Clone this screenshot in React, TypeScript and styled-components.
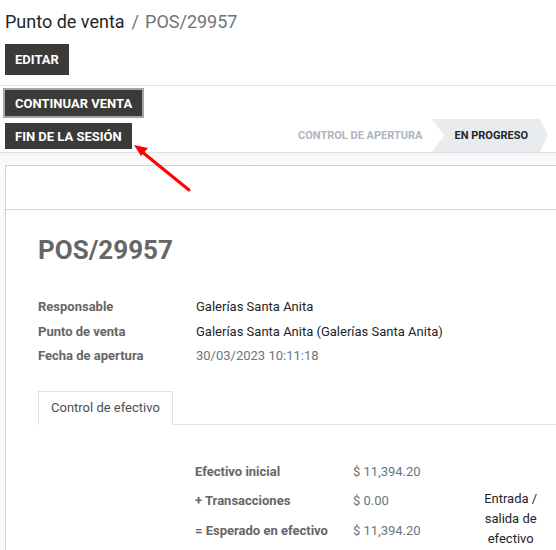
import React from "react";
import styled, { createGlobalStyle } from "styled-components";

const Global = createGlobalStyle`
  html, body { margin: 0; padding: 0; background: #fff; }
  body { font-family: Roboto, "Noto Sans", "Liberation Sans", sans-serif; color: #212529; overflow: hidden; }
  * { box-sizing: border-box; }
`;

const Page = styled.div`
  position: relative;
  width: 556px;
  height: 550px;
  overflow: hidden;
`;

const ControlPanel = styled.div`
  padding: 10px 0 10px 5px;
  border-bottom: 1px solid #dee2e6;
`;

const Breadcrumb = styled.div`
  font-size: 18px;
  line-height: 24px;
  color: #212529;
  white-space: nowrap;
`;

const Crumb = styled.span<{ $active?: boolean }>`
  color: ${(p) => (p.$active ? "#6c757d" : "#212529")};
`;

const Sep = styled.span`
  color: #6c757d;
  margin: 0 6px 0 7px;
`;

const Toolbar = styled.div`
  margin-top: 10px;
  display: flex;
`;

const DarkButton = styled.button<{ $focused?: boolean; $tall?: boolean }>`
  background: #3a3a38;
  color: #fff;
  border: none;
  font-family: Roboto, "Liberation Sans", sans-serif;
  font-weight: 700;
  font-size: 13px;
  letter-spacing: 0;
  text-transform: uppercase;
  height: ${(p) => (p.$tall ? "31px" : "26px")};
  padding: 0 10px;
  cursor: pointer;
  white-space: nowrap;
  outline: ${(p) => (p.$focused ? "2px solid #a6a6a6" : "none")};
  outline-offset: 0;
`;

const Header = styled.div`
  display: flex;
  justify-content: space-between;
  align-items: flex-end;
  padding: 4px 0 3px 5px;
  border-bottom: 1px solid #dee2e6;
`;

const ButtonStack = styled.div`
  display: flex;
  flex-direction: column;
  align-items: flex-start;
  gap: 7px;
`;

const StatusBar = styled.div`
  display: flex;
  align-items: center;
  margin-right: 8px;
  margin-bottom: -3px;
`;

const StatusStep = styled.div<{ $current?: boolean }>`
  height: 33px;
  display: flex;
  align-items: center;
  font-size: 11px;
  font-weight: 700;
  text-transform: uppercase;
  white-space: nowrap;
  color: ${(p) => (p.$current ? "#212529" : "#adb5bd")};
  background: ${(p) => (p.$current ? "#e9ecef" : "transparent")};
  padding: ${(p) => (p.$current ? "0 20px 0 23px" : "0 9px 0 0")};
  clip-path: ${(p) =>
    p.$current
      ? "polygon(0 0, calc(100% - 8px) 0, 100% 50%, calc(100% - 8px) 100%, 0 100%, 13px 50%)"
      : "none"};
`;

const SheetBg = styled.div`
  background: linear-gradient(#f6f6f6, #ffffff 20px);
  padding: 12px 0 0 5px;
`;

const Sheet = styled.div`
  background: #fff;
  border: 1px solid #ced4da;
  border-right: none;
  box-shadow: -2px 4px 8px rgba(0, 0, 0, 0.06);
  height: 400px;
`;

const SheetTop = styled.div`
  height: 44px;
  border-bottom: 1px solid #ced4da;
`;

const SheetBody = styled.div`
  padding: 22px 0 0 32px;
`;

const Title = styled.h1`
  margin: 0;
  font-size: 26px;
  line-height: 36px;
  font-weight: 700;
  color: #666666;
`;

const FieldGrid = styled.div`
  margin-top: 29px;
  display: grid;
  grid-template-columns: 158px auto;
  row-gap: 4px;
  font-size: 13px;
  line-height: 20.5px;
`;

const Label = styled.div`
  font-weight: 700;
  color: #666666;
  white-space: nowrap;
`;

const Value = styled.div<{ $muted?: boolean }>`
  color: ${(p) => (p.$muted ? "#6c757d" : "#212529")};
  white-space: nowrap;
`;

const Tabs = styled.div`
  margin-top: 24px;
  display: flex;
  border-bottom: 1px solid #dee2e6;
`;

const Tab = styled.div`
  border: 1px solid #dee2e6;
  border-bottom-color: #fff;
  margin-bottom: -1px;
  padding: 0 12px;
  height: 34px;
  display: flex;
  align-items: center;
  font-size: 13px;
  color: #495057;
  background: #fff;
`;

const CashArea = styled.div`
  margin-top: 32px;
  padding-left: 157px;
  display: flex;
  font-size: 13px;
`;

const CashTable = styled.div`
  display: grid;
  grid-template-columns: 158px auto;
  grid-auto-rows: 29.5px;
  align-items: center;
`;

const CashValue = styled.div`
  color: #6c757d;
  white-space: nowrap;
`;

const CashSide = styled.div`
  margin-left: 48px;
  margin-top: 32px;
  width: 84px;
  text-align: center;
  line-height: 20px;
  color: #212529;
`;

const ArrowOverlay = styled.svg`
  position: absolute;
  left: 0;
  top: 0;
  pointer-events: none;
`;

export default function App() {
  return (
    <Page>
      <Global />
      <ControlPanel>
        <Breadcrumb>
          <Crumb>Punto de venta</Crumb>
          <Sep>/</Sep>
          <Crumb $active>POS/29957</Crumb>
        </Breadcrumb>
        <Toolbar>
          <DarkButton $tall>Editar</DarkButton>
        </Toolbar>
      </ControlPanel>
      <Header>
        <ButtonStack>
          <DarkButton $focused>Continuar venta</DarkButton>
          <DarkButton>Fin de la sesión</DarkButton>
        </ButtonStack>
        <StatusBar>
          <StatusStep>Control de apertura</StatusStep>
          <StatusStep $current>En progreso</StatusStep>
        </StatusBar>
      </Header>
      <SheetBg>
        <Sheet>
          <SheetTop />
          <SheetBody>
            <Title>POS/29957</Title>
            <FieldGrid>
              <Label>Responsable</Label>
              <Value>Galerías Santa Anita</Value>
              <Label>Punto de venta</Label>
              <Value>Galerías Santa Anita (Galerías Santa Anita)</Value>
              <Label>Fecha de apertura</Label>
              <Value $muted>30/03/2023 10:11:18</Value>
            </FieldGrid>
            <Tabs>
              <Tab>Control de efectivo</Tab>
            </Tabs>
            <CashArea>
              <CashTable>
                <Label>Efectivo inicial</Label>
                <CashValue>$ 11,394.20</CashValue>
                <Label>+ Transacciones</Label>
                <CashValue>$ 0.00</CashValue>
                <Label>= Esperado en efectivo</Label>
                <CashValue>$ 11,394.20</CashValue>
              </CashTable>
              <CashSide>Entrada / salida de efectivo</CashSide>
            </CashArea>
          </SheetBody>
        </Sheet>
      </SheetBg>
      <ArrowOverlay width="556" height="550" viewBox="0 0 556 550">
        <line x1="189" y1="190" x2="141" y2="151" stroke="#ff0000" strokeWidth="3" strokeLinecap="round" />
        <polygon points="134,145 148,148 141,156" fill="#ff0000" />
      </ArrowOverlay>
    </Page>
  );
}
